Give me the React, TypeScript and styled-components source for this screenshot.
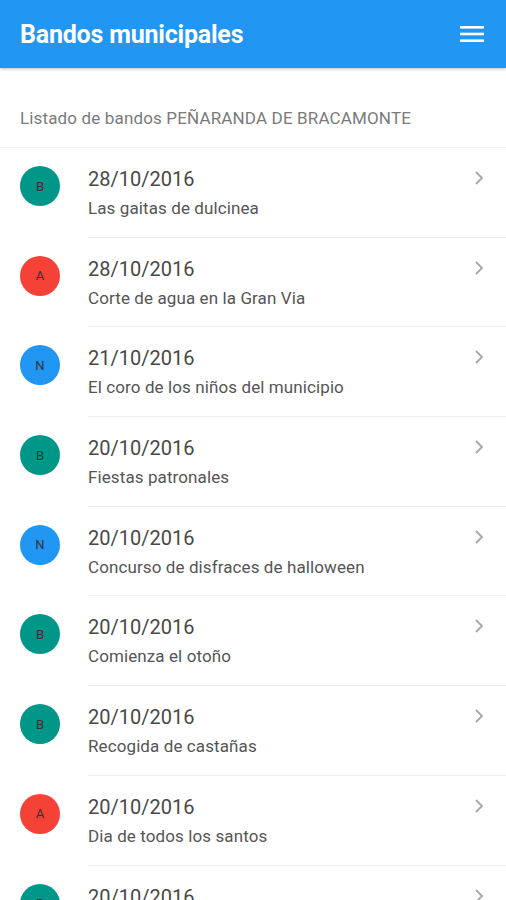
import styled, { createGlobalStyle } from "styled-components";

const GlobalStyle = createGlobalStyle`
  body {
    margin: 0;
    font-family: Roboto, "Noto Sans", sans-serif;
    background: #fff;
  }
`

type Bando = {
    date: string
    title: string
    kind: "B" | "A" | "N"
}

const bandos: Bando[] = [
    {date: "28/10/2016", title: "Las gaitas de dulcinea", kind: "B"},
    {date: "28/10/2016", title: "Corte de agua en la Gran Via", kind: "A"},
    {date: "21/10/2016", title: "El coro de los niños del municipio", kind: "N"},
    {date: "20/10/2016", title: "Fiestas patronales", kind: "B"},
    {date: "20/10/2016", title: "Concurso de disfraces de halloween", kind: "N"},
    {date: "20/10/2016", title: "Comienza el otoño", kind: "B"},
    {date: "20/10/2016", title: "Recogida de castañas", kind: "B"},
    {date: "20/10/2016", title: "Dia de todos los santos", kind: "A"},
    {date: "20/10/2016", title: "Mercadillo de artesanía", kind: "B"},
]

const kindColors = {
    B: "#009688",
    A: "#f44336",
    N: "#2196f3",
}

function App() {
    return (
        <Page>
            <GlobalStyle/>
            <Toolbar>
                <Title>Bandos municipales</Title>
                <MenuButton>
                    <svg width="24" height="16" viewBox="0 0 24 16">
                        <rect x="0" y="0" width="24" height="2.6" fill="#fff"/>
                        <rect x="0" y="6.7" width="24" height="2.6" fill="#fff"/>
                        <rect x="0" y="13.4" width="24" height="2.6" fill="#fff"/>
                    </svg>
                </MenuButton>
            </Toolbar>
            <ListHeader>Listado de bandos PEÑARANDA DE BRACAMONTE</ListHeader>
            <List>
                {bandos.map((b, i) => (
                    <Row key={i}>
                        <Avatar color={kindColors[b.kind]}>{b.kind}</Avatar>
                        <RowBody>
                            <DateText>{b.date}</DateText>
                            <RowTitle>{b.title}</RowTitle>
                        </RowBody>
                        <Chevron width="10" height="16" viewBox="0 0 10 16">
                            <path d="M2 2 L8 8 L2 14" fill="none" stroke="#a6a6a6" strokeWidth="1.8"/>
                        </Chevron>
                    </Row>
                ))}
            </List>
        </Page>
    )
}

export default App;

const Page = styled.div`
  width: 506px;
  height: 900px;
  overflow: hidden;
  background: #fff;
`

const Toolbar = styled.header`
  height: 68px;
  background-color: #2196f3;
  display: flex;
  align-items: center;
  justify-content: space-between;
  padding: 0 22px 0 20px;
  box-shadow: 0 1px 3px rgba(0, 0, 0, 0.25);
  position: relative;
`

const Title = styled.h1`
  margin: 0;
  color: #fff;
  font-size: 25px;
  font-weight: 700;
  letter-spacing: -0.2px;
`

const MenuButton = styled.div`
  display: flex;
  align-items: center;
`

const ListHeader = styled.div`
  height: 80px;
  box-sizing: border-box;
  padding-top: 40px;
  padding-left: 20px;
  color: #7a7a7a;
  font-size: 17px;
  letter-spacing: 0.15px;
  line-height: 20px;
  border-bottom: 1px solid #eeeeee;
`

const List = styled.div`
  display: flex;
  flex-direction: column;
`

const Row = styled.div`
  height: 89.7px;
  box-sizing: border-box;
  display: flex;
  align-items: flex-start;
  padding: 19px 20px 0 20px;
  position: relative;
  &::after {
    content: "";
    position: absolute;
    left: 88px;
    right: 0;
    bottom: 0;
    border-bottom: 1px solid #eeeeee;
  }
`

const Avatar = styled.div<{ color: string }>`
  width: 40px;
  height: 40px;
  margin-top: -1px;
  border-radius: 50%;
  background: ${(p) => p.color};
  color: #333;
  font-size: 13px;
  display: flex;
  align-items: center;
  justify-content: center;
  flex-shrink: 0;
`

const RowBody = styled.div`
  flex: 1;
  margin-left: 28px;
  display: flex;
  flex-direction: column;
`

const DateText = styled.div`
  color: #484848;
  font-size: 20px;
  line-height: 24px;
`

const RowTitle = styled.div`
  color: #555;
  font-size: 17px;
  letter-spacing: 0.1px;
  line-height: 24px;
  margin-top: 5px;
`

const Chevron = styled.svg`
  margin-top: 3px;
  margin-right: 2px;
  flex-shrink: 0;
`
